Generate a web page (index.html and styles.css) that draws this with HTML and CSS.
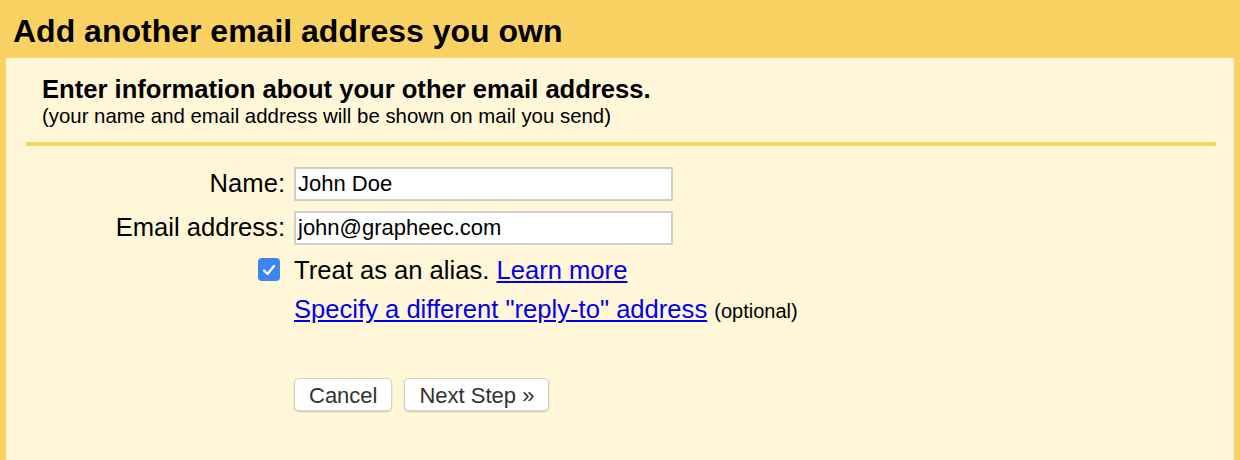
FILE: index.html
```html
<!DOCTYPE html>
<html>
<head>
<meta charset="utf-8">
<link rel="stylesheet" href="styles.css">
</head>
<body>
<div class="frame">
  <h1 class="title">Add another email address you own</h1>
  <div class="panel">
    <div class="intro">
      <div class="intro-head">Enter information about your other email address.</div>
      <div class="intro-sub">(your name and email address will be shown on mail you send)</div>
    </div>
    <div class="sep"></div>
    <div class="form">
      <label class="lbl">Name:</label>
      <div class="field"><span class="input">John Doe</span></div>
      <label class="lbl lbl-email">Email address:</label>
      <div class="field field-email"><span class="input">john@grapheec.com</span></div>
      <div class="cb-cell">
        <span class="checkbox">
          <svg width="14" height="12" viewBox="0 0 14 12"><path d="M2 6.5 L5.5 10 L12 2" fill="none" stroke="#fff" stroke-width="2.2" stroke-linecap="round" stroke-linejoin="round"/></svg>
        </span>
      </div>
      <div class="alias">Treat as an alias. <a href="#" class="link">Learn more</a></div>
      <div></div>
      <div class="reply"><a href="#" class="link">Specify a different "reply-to" address</a> <span class="optional">(optional)</span></div>
      <div></div>
      <div class="buttons">
        <button class="btn">Cancel</button>
        <button class="btn">Next Step »</button>
      </div>
    </div>
  </div>
</div>
</body>
</html>
```

FILE: styles.css
```css
html, body {
  margin: 0;
  padding: 0;
}
body {
  background: #fad163;
  font-family: "Liberation Sans", Arial, Helvetica, sans-serif;
  color: #000;
  width: 1240px;
  height: 460px;
  overflow: hidden;
}
.frame {
  display: flex;
  flex-direction: column;
  height: 460px;
}
.title {
  margin: 0;
  height: 58px;
  box-sizing: border-box;
  padding: 13px 0 0 13px;
  font-size: 32px;
  line-height: 37px;
  font-weight: bold;
}
.panel {
  flex: 1;
  margin: 0 6px;
  background: #fff7d7;
}
.intro {
  padding: 18px 0 0 36px;
}
.intro-head {
  font-size: 25.6px;
  font-weight: bold;
  line-height: 26px;
}
.intro-sub {
  margin-top: 2px;
  font-size: 20.4px;
  line-height: 25px;
}
.sep {
  height: 4px;
  margin: 13px 18px 0 20px;
  background: #fad163;
}
.form {
  display: grid;
  grid-template-columns: 280px 1fr;
  column-gap: 8px;
  padding-top: 21px;
}
.lbl {
  text-align: right;
  font-size: 25.6px;
  line-height: 33px;
  height: 34px;
  margin-bottom: 10px;
  margin-right: 1px;
}
.lbl-email,
.field-email {
  margin-bottom: 10px;
}
.field {
  height: 34px;
}
.input {
  display: block;
  box-sizing: border-box;
  width: 379px;
  height: 34px;
  background: #fff;
  border: 2px solid #cfcfcf;
  padding: 0 2px;
  font-size: 22px;
  line-height: 30px;
}
.cb-cell {
  display: flex;
  justify-content: flex-end;
  align-items: flex-start;
  padding-top: 3px;
  padding-right: 6px;
}
.checkbox {
  width: 22px;
  height: 23px;
  border-radius: 4px;
  background: #3b86f4;
  display: flex;
  align-items: center;
  justify-content: center;
}
.alias {
  font-size: 25.6px;
  line-height: 30px;
  height: 30px;
}
.link {
  color: #0000ee;
  text-decoration: underline;
}
.reply {
  margin-top: 9px;
  font-size: 25.6px;
  line-height: 30px;
  height: 30px;
}
.optional {
  font-size: 20px;
}
.buttons {
  display: flex;
  gap: 12px;
  margin-top: 54px;
}
.btn {
  font-family: "Liberation Sans", Arial, sans-serif;
  font-size: 22px;
  color: #333;
  background: #fff;
  border: 1px solid #d6d3c8;
  border-radius: 5px;
  box-shadow: 0 1px 2px rgba(0,0,0,0.2);
  height: 33px;
  padding: 3px 14px 0;
  line-height: 28px;
}
```
